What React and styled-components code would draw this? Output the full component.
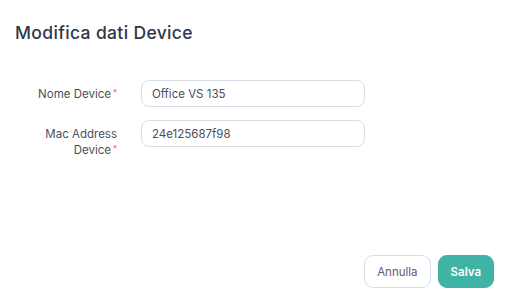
import React from 'react';
import styled, { createGlobalStyle } from 'styled-components';

const GlobalStyle = createGlobalStyle`
  html, body {
    margin: 0;
    padding: 0;
    background: #ffffff;
  }
  body {
    font-family: Inter, "Noto Sans", sans-serif;
  }
`;

const Modal = styled.div`
  box-sizing: border-box;
  width: 517px;
  height: 302px;
  display: flex;
  flex-direction: column;
  padding: 21px 23px 14px 15px;
  background: #fff;
`;

const Title = styled.h2`
  margin: 0;
  font-size: 17.5px;
  line-height: 24px;
  font-weight: 500;
  color: #2d3748;
  letter-spacing: 0.35px;
`;

const Form = styled.form`
  display: flex;
  flex-direction: column;
  gap: 13px;
  margin-top: 35px;
`;

const Row = styled.div`
  display: flex;
  align-items: flex-start;
  gap: 24px;
`;

const Label = styled.label`
  box-sizing: border-box;
  width: 102px;
  padding-top: 6px;
  text-align: right;
  font-size: 11.5px;
  line-height: 16px;
  color: #4a5160;
`;

const Required = styled.span`
  position: relative;
  top: -3px;
  margin-left: 2px;
  color: #e8506e;
  font-size: 8px;
  line-height: 1;
`;

const Input = styled.input`
  box-sizing: border-box;
  width: 224px;
  height: 27px;
  padding: 0 10px;
  border: 1px solid #d7dee7;
  border-radius: 8px;
  font-family: inherit;
  font-size: 11.5px;
  color: #4a4f58;
  background: #fff;
  outline: none;
`;

const Footer = styled.div`
  margin-top: auto;
  display: flex;
  justify-content: flex-end;
  gap: 7px;
`;

const Button = styled.button`
  box-sizing: border-box;
  height: 33px;
  padding: 0 ${p => (p.$primary ? '12px' : '12px')};
  border-radius: 9px;
  font-family: inherit;
  font-size: 11.5px;
  font-weight: ${p => (p.$primary ? 600 : 400)};
  cursor: pointer;
  border: 1px solid ${p => (p.$primary ? '#3fb3a5' : '#d7dee7')};
  background: ${p => (p.$primary ? '#3fb3a5' : '#ffffff')};
  color: ${p => (p.$primary ? '#ffffff' : '#5a6070')};
`;

export default function App() {
  return (
    <>
      <GlobalStyle />
      <Modal>
        <Title>Modifica dati Device</Title>
        <Form onSubmit={e => e.preventDefault()}>
          <Row>
            <Label>
              Nome Device<Required>*</Required>
            </Label>
            <Input defaultValue="Office VS 135" />
          </Row>
          <Row>
            <Label>
              Mac Address Device<Required>*</Required>
            </Label>
            <Input defaultValue="24e125687f98" />
          </Row>
        </Form>
        <Footer>
          <Button type="button">Annulla</Button>
          <Button type="button" $primary>
            Salva
          </Button>
        </Footer>
      </Modal>
    </>
  );
}
